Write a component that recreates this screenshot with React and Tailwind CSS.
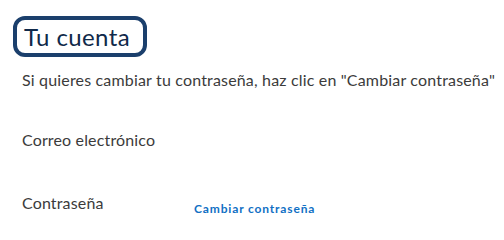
import React from 'react';

const rows = [
  { label: 'Correo electrónico', action: null },
  { label: 'Contraseña', action: 'Cambiar contraseña' },
];

const App = () => {
  return (
    <div className="w-[504px] h-[226px] bg-white overflow-hidden pl-[13px] pt-[16px]" style={{ fontFamily: 'Lato, "Noto Sans", sans-serif' }}>
      <div className="inline-flex items-center h-[41px] pl-[7px] pr-[13px] border-[4px] border-[#1b3f6c] rounded-[12px]">
        <h1 className="text-[24px] leading-none font-normal text-[#10294a] tracking-[0.4px]">Tu cuenta</h1>
      </div>

      <div className="pl-[9px]">
        <p className="mt-[13px] text-[16px] leading-[20px] tracking-[0.17px] text-[#3b3b3b]">
          Si quieres cambiar tu contraseña, haz clic en "Cambiar contraseña"
        </p>

        <div className="mt-[40px] flex flex-col gap-[43px]">
          {rows.map((row) => (
            <div key={row.label} className="flex items-start h-[20px]">
              <span className="w-[172px] text-[16px] leading-[20px] tracking-[0.15px] text-[#3b3b3b]">{row.label}</span>
              {row.action && (
                <a href="#" className="mt-[9px] text-[12px] leading-[14px] font-bold tracking-[0.85px] text-[#1170c4]">
                  {row.action}
                </a>
              )}
            </div>
          ))}
        </div>
      </div>
    </div>
  );
};

export default App;
